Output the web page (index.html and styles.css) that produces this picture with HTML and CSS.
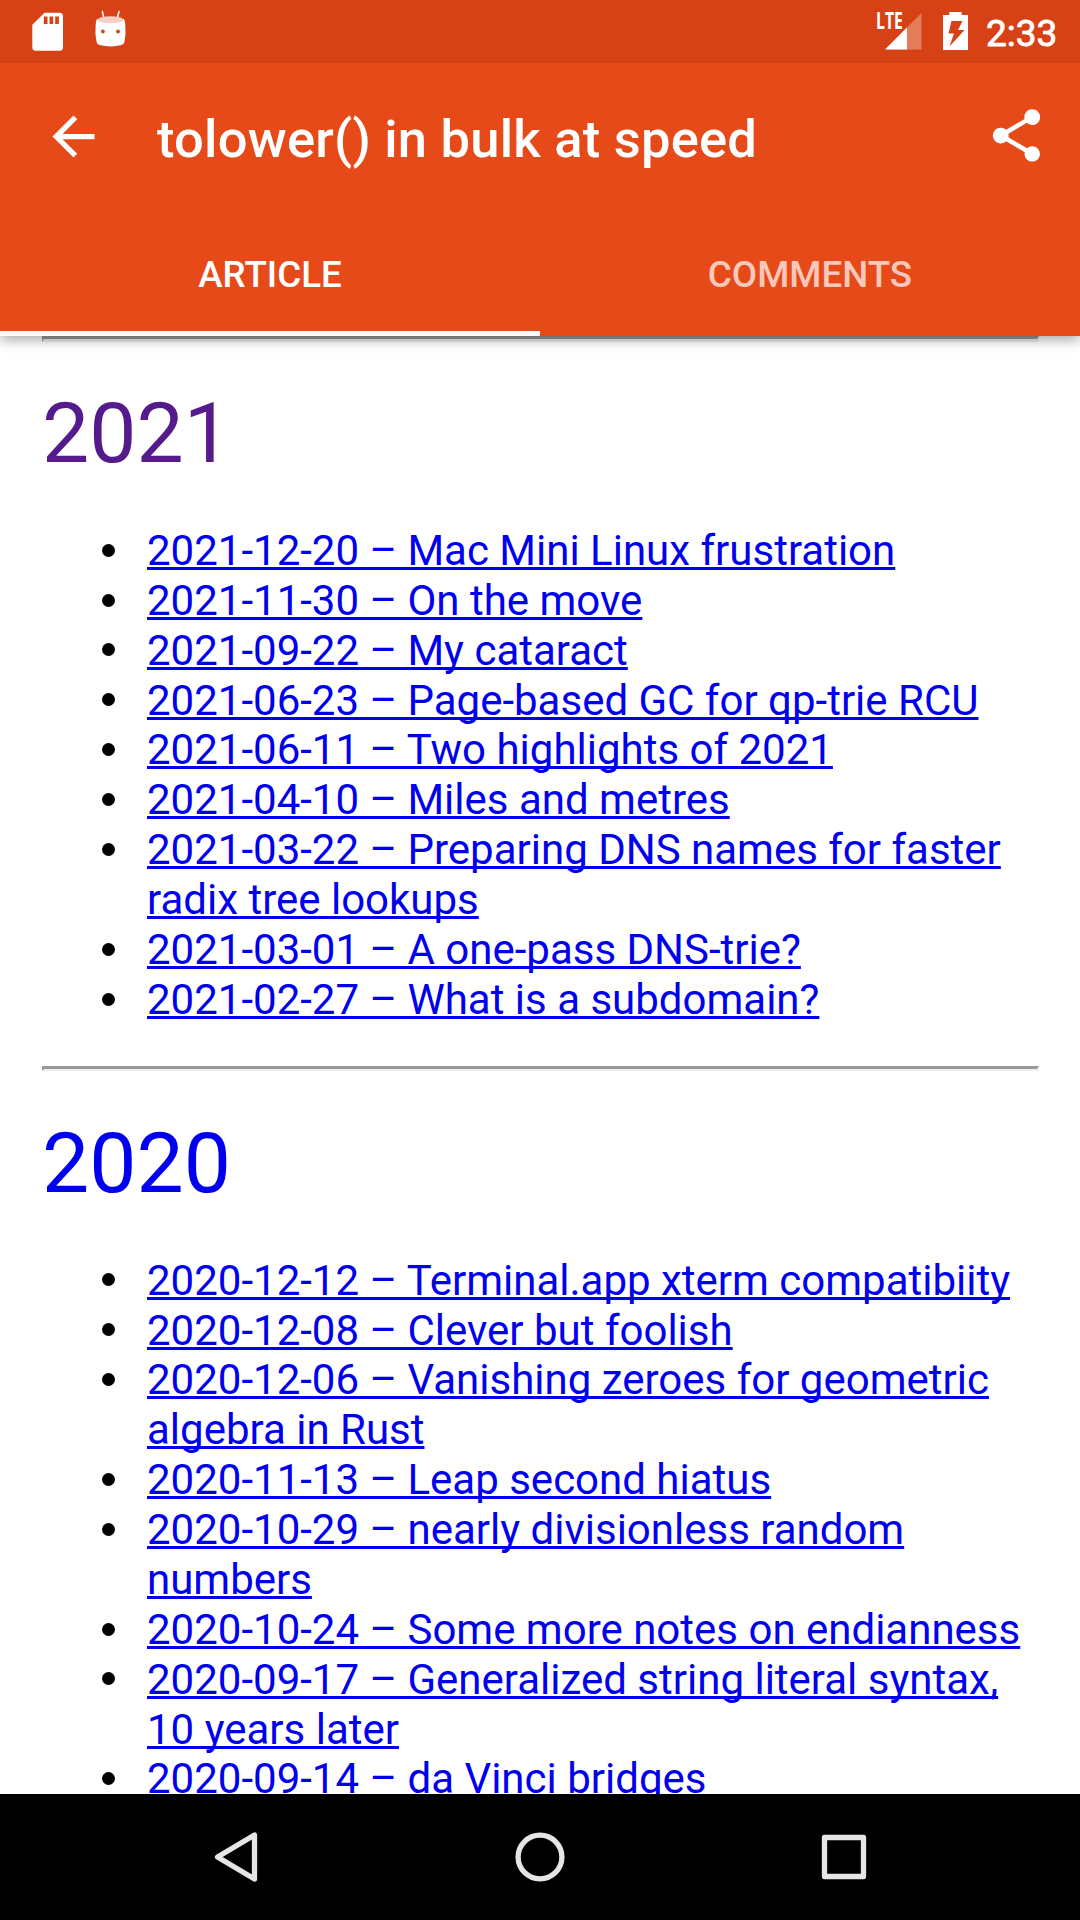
FILE: index.html
```html
<!DOCTYPE html>
<html lang="en">
<head>
<meta charset="utf-8">
<title>tolower() in bulk at speed</title>
<link rel="stylesheet" href="styles.css">
</head>
<body>
<div class="screen">
  <header class="top">
    <div class="status">
      <svg class="status-left" width="140" height="63" viewBox="0 0 140 63" fill="#fff">
        <path fill-rule="evenodd" d="M44.5 12.7H59.5Q63 12.7 63 16.2V47.3Q63 50.8 59.5 50.8H35.8Q32.3 50.8 32.3 47.3V24.8ZM43.8 16.4V24H47.5V16.4ZM49.5 16.4V24H53.2V16.4ZM55.2 16.4V24H58.9V16.4Z"/>
        <path d="M102.4 11.5 103.9 18.3M119 11.5 117.3 18.3" stroke="#fff" stroke-width="1.5" stroke-linecap="round"/>
        <path d="M97.2 19Q110.500 23 123.800 19Q125 20 125.300 25Q126.200 34 124.400 42Q124 44.300 121.500 45.100Q110.500 48 99.500 45.100Q97 44.300 96.600 42Q94.700 34 95.700 25Q96 20 97.200 19Z"/>
        <circle cx="102.900" cy="31.500" r="1.900" fill="#d64215"/>
        <circle cx="118" cy="31.500" r="1.900" fill="#d64215"/>
        <ellipse cx="110.500" cy="19.700" rx="12.700" ry="3.500" fill="#f6cfc3"/>
      </svg>
      <div class="status-right">
        <div class="signal">
          <span class="lte">LTE</span>
          <svg width="37" height="37" viewBox="0 0 37 37"><path d="M36.500 0V36.500H0Z" fill="#e57c5a"/><path d="M22 14.500V36.500H0Z" fill="#fff"/></svg>
        </div>
        <svg class="battery" width="25" height="38" viewBox="0 0 25 38"><path fill="#fff" d="M6.300 0H18.700V3H25V38H0V3H6.300Z"/><path fill="#d64215" d="M8.500 9H19.500L15 18H21.500L6.500 34.500L11 21.500H5.500Z"/></svg>
        <span class="clock">2:33</span>
      </div>
    </div>
    <div class="toolbar">
      <svg class="back" width="63" height="63" viewBox="0 0 24 24" fill="#fff"><path d="M20 11H7.830l5.590-5.590L12 4l-8 8 8 8 1.410-1.410L7.830 13H20v-2z"/></svg>
      <h1 class="title">tolower() in bulk at speed</h1>
      <svg class="share" width="63" height="63" viewBox="0 0 24 24" fill="#fff"><path d="M18 16.080c-.76 0-1.440.3-1.960.77L8.910 12.700c.05-.23.09-.46.09-.7s-.04-.47-.09-.7l7.050-4.110c.54.5 1.250.81 2.040.81 1.660 0 3-1.340 3-3s-1.340-3-3-3-3 1.340-3 3c0 .24.040.47.090.7L8.040 9.810C7.500 9.310 6.790 9 6 9c-1.660 0-3 1.340-3 3s1.340 3 3 3c.79 0 1.500-.31 2.040-.81l7.120 4.160c-.05.21-.08.43-.08.65 0 1.610 1.310 2.920 2.920 2.920s2.920-1.310 2.920-2.920-1.310-2.920-2.920-2.920z"/></svg>
    </div>
    <nav class="tabs">
      <div class="tab active"><span>ARTICLE</span></div>
      <div class="tab"><span>COMMENTS</span></div>
    </nav>
  </header>
  <main class="page">
    <hr class="first">
    <h2><a class="visited">2021</a></h2>
    <ul>
      <li><a>2021-12-20 – Mac Mini Linux frustration</a></li>
      <li><a>2021-11-30 – On the move</a></li>
      <li><a>2021-09-22 – My cataract</a></li>
      <li><a>2021-06-23 – Page-based GC for qp-trie RCU</a></li>
      <li><a>2021-06-11 – Two highlights of 2021</a></li>
      <li><a>2021-04-10 – Miles and metres</a></li>
      <li><a>2021-03-22 – Preparing DNS names for faster radix tree lookups</a></li>
      <li><a>2021-03-01 – A one-pass DNS-trie?</a></li>
      <li><a>2021-02-27 – What is a subdomain?</a></li>
    </ul>
    <hr>
    <h2><a>2020</a></h2>
    <ul>
      <li><a>2020-12-12 – Terminal.app xterm compatibiity</a></li>
      <li><a>2020-12-08 – Clever but foolish</a></li>
      <li><a>2020-12-06 – Vanishing zeroes for geometric algebra in Rust</a></li>
      <li><a>2020-11-13 – Leap second hiatus</a></li>
      <li><a>2020-10-29 – nearly divisionless random numbers</a></li>
      <li><a>2020-10-24 – Some more notes on endianness</a></li>
      <li><a>2020-09-17 – Generalized string literal syntax, 10 years later</a></li>
      <li><a>2020-09-14 – da Vinci bridges</a></li>
    </ul>
  </main>
  <footer class="navbar">
    <svg width="60" height="60" viewBox="0 0 60 60"><path d="M48.500 8V52L11.500 30Z"/></svg>
    <svg width="60" height="60" viewBox="0 0 60 60"><circle cx="30" cy="30" r="21.900"/></svg>
    <svg width="60" height="60" viewBox="0 0 60 60"><rect x="10.500" y="10.500" width="39" height="39"/></svg>
  </footer>
</div>
</body>
</html>
```
FILE: styles.css
```css
* {
  box-sizing: border-box;
}

body {
  margin: 0;
  font-family: Roboto, sans-serif;
  background: #fff;
}

.screen {
  width: 1080px;
  height: 1920px;
  display: flex;
  flex-direction: column;
  overflow: hidden;
}

.top {
  position: relative;
  z-index: 1;
  height: 336px;
  flex: none;
  background: #e64a19;
  color: #fff;
  box-shadow: 0 4px 12px rgba(0, 0, 0, 0.34);
}

.status {
  height: 63px;
  background: #d64215;
  display: flex;
  justify-content: space-between;
}

.status-right {
  display: flex;
  align-items: flex-start;
  padding: 12px 21px 0 0;
}

.signal {
  display: flex;
  align-items: flex-start;
  margin-top: 1px;
}

.lte {
  width: 9px;
  font: 700 22.5px/22px "Open Sans", sans-serif;
  transform: scaleX(0.7);
  transform-origin: 0 0;
  margin-top: -3px;
  margin-left: -1px;
  white-space: nowrap;
}

.battery {
  margin-left: 21px;
}

.clock {
  width: 73px;
  margin-left: 18px;
  margin-top: 0;
  font-size: 37px;
  font-weight: 400;
  line-height: 43px;
  -webkit-text-stroke: 0.8px #fff;
}

.toolbar {
  height: 147px;
  display: flex;
  align-items: center;
  padding: 0 32px 0 42px;
}

.share {
  margin-bottom: 2px;
}

.title {
  flex: 1;
  margin: 4px 0 0 52px;
  font-size: 52.5px;
  font-weight: 500;
  line-height: 62px;
  letter-spacing: 0.22px;
}

.tabs {
  display: flex;
  height: 126px;
}

.tab {
  flex: 1;
  padding-top: 43px;
  text-align: center;
  font-size: 36.75px;
  font-weight: 500;
  line-height: 43px;
  color: #fac8ba;
}

.tab.active {
  color: #fff;
  border-bottom: 5px solid #fff;
}

.page {
  flex: 1;
  min-height: 0;
  overflow: hidden;
  padding: 0 42px;
  font-size: 42px;
  line-height: 49.875px;
}

.page hr {
  height: 5px;
  margin: 0 -1px 44px 0;
  border-style: solid;
  border-width: 3px 2px 2px;
  border-color: #9a9a9a #eee #eee #9a9a9a;
}

.page hr.first {
  height: 6px;
  margin-bottom: 43px;
  border-bottom-width: 3px;
}

.page h2 {
  margin: 0 0 42.9px;
  font-size: 84px;
  font-weight: 400;
  line-height: 98px;
}

.page ul {
  margin: 0 0 41.1px;
  padding-left: 105px;
  list-style: none;
}

.page li::before {
  content: "";
  display: inline-block;
  width: 13px;
  height: 13px;
  margin: 0 31.7px 0 -44.7px;
  border-radius: 50%;
  background: #000;
  vertical-align: 8.2px;
}

.page a {
  color: #00e;
}

.page .visited {
  color: #551a8b;
}

.page li a {
  text-decoration: underline;
  text-decoration-thickness: 2.6px;
  text-underline-offset: 2px;
  text-decoration-skip-ink: none;
}

.navbar {
  height: 126px;
  flex: none;
  display: flex;
  justify-content: space-between;
  align-items: center;
  padding: 0 206px;
  background: #000;
}

.navbar svg {
  fill: none;
  stroke: #e6e6e6;
  stroke-width: 5.3;
  stroke-linejoin: round;
}
```
